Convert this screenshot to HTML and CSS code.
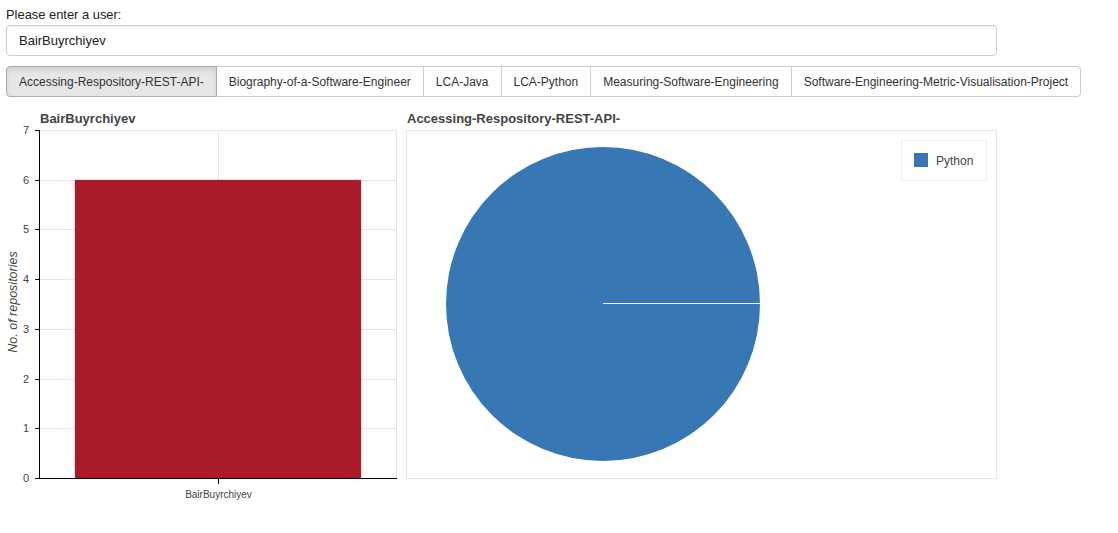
FILE: index.html
```html
<!DOCTYPE html>
<html>
<head>
<meta charset="utf-8">
<title>Repositories</title>
<link rel="stylesheet" href="styles.css">
</head>
<body>
<div class="app">
  <label class="field-label" for="user">Please enter a user:</label>
  <input id="user" class="text-input" type="text" value="BairBuyrchiyev">
  <div class="tabs">
    <button class="tab active">Accessing-Respository-REST-API-</button>
    <button class="tab">Biography-of-a-Software-Engineer</button>
    <button class="tab">LCA-Java</button>
    <button class="tab">LCA-Python</button>
    <button class="tab">Measuring-Software-Engineering</button>
    <button class="tab">Software-Engineering-Metric-Visualisation-Project</button>
  </div>
  <div class="charts">
    <svg class="bar-chart" width="400" height="410" viewBox="0 100 400 410">
      <text class="chart-title" x="40" y="123">BairBuyrchiyev</text>
      <g class="grid">
        <line x1="39" y1="130.5" x2="396" y2="130.5"/>
        <line x1="39" y1="180.5" x2="396" y2="180.5"/>
        <line x1="39" y1="229.5" x2="396" y2="229.5"/>
        <line x1="39" y1="279.5" x2="396" y2="279.5"/>
        <line x1="39" y1="329.5" x2="396" y2="329.5"/>
        <line x1="39" y1="379.5" x2="396" y2="379.5"/>
        <line x1="39" y1="428.5" x2="396" y2="428.5"/>
        <line x1="218.5" y1="130" x2="218.5" y2="478"/>
        <line x1="396.5" y1="130" x2="396.5" y2="478"/>
      </g>
      <rect class="bar" x="75" y="180" width="286" height="298"/>
      <g class="axis">
        <line x1="39.5" y1="130" x2="39.5" y2="479"/>
        <line x1="39" y1="478.5" x2="397" y2="478.5"/>
        <line x1="35" y1="130.5" x2="39" y2="130.5"/>
        <line x1="35" y1="180.5" x2="39" y2="180.5"/>
        <line x1="35" y1="229.5" x2="39" y2="229.5"/>
        <line x1="35" y1="279.5" x2="39" y2="279.5"/>
        <line x1="35" y1="329.5" x2="39" y2="329.5"/>
        <line x1="35" y1="379.5" x2="39" y2="379.5"/>
        <line x1="35" y1="428.5" x2="39" y2="428.5"/>
        <line x1="35" y1="478.5" x2="39" y2="478.5"/>
        <line x1="218.5" y1="478" x2="218.5" y2="484"/>
      </g>
      <g class="tick-labels">
        <text x="29" y="134">7</text>
        <text x="29" y="184">6</text>
        <text x="29" y="233">5</text>
        <text x="29" y="283">4</text>
        <text x="29" y="333">3</text>
        <text x="29" y="383">2</text>
        <text x="29" y="432">1</text>
        <text x="29" y="482">0</text>
      </g>
      <text class="x-label" x="218.5" y="498">BairBuyrchiyev</text>
      <text class="y-label" transform="translate(17 302) rotate(-90)">No. of repositories</text>
    </svg>
    <svg class="pie-chart" width="600" height="390" viewBox="400 100 600 390">
      <text class="chart-title" x="407" y="123">Accessing-Respository-REST-API-</text>
      <rect class="pie-frame" x="406.5" y="130.5" width="590" height="348"/>
      <circle class="slice" cx="603" cy="304" r="157"/>
      <line class="slice-edge" x1="603" y1="303.5" x2="761" y2="303.5"/>
      <rect class="legend" x="901.5" y="140.5" width="85" height="40"/>
      <rect class="swatch" x="914" y="153" width="14" height="14"/>
      <text class="legend-text" x="936" y="164.5">Python</text>
    </svg>
  </div>
</div>
</body>
</html>
```

FILE: styles.css
```css
html, body {
  margin: 0;
  padding: 0;
  background: #fff;
}

.app {
  padding: 5px 6px 0 6px;
  font-family: "Liberation Sans", Arial, sans-serif;
  color: #333;
}

.field-label {
  display: block;
  font-size: 12.9px;
  line-height: 20px;
  height: 20px;
  color: #222;
}

.text-input {
  display: block;
  box-sizing: border-box;
  width: 991px;
  height: 31px;
  margin: 0;
  padding: 0 12px;
  border: 1px solid #ccc;
  border-radius: 4px;
  font-family: "Liberation Sans", Arial, sans-serif;
  font-size: 13px;
  color: #222;
  background: #fff;
  box-shadow: inset 0 1px 1px rgba(0, 0, 0, 0.06);
  outline: none;
}

.tabs {
  display: flex;
  margin-top: 10px;
  height: 31px;
}

.tab {
  box-sizing: border-box;
  height: 31px;
  margin: 0 0 0 -1px;
  padding: 0 12px;
  border: 1px solid #ccc;
  background: #fff;
  font-family: "Liberation Sans", Arial, sans-serif;
  font-size: 12px;
  color: #333;
  white-space: nowrap;
  cursor: pointer;
}

.tab:first-child {
  margin-left: 0;
  border-radius: 4px 0 0 4px;
}

.tab:last-child {
  border-radius: 0 4px 4px 0;
}

.tab.active {
  position: relative;
  background: #e6e6e6;
  border-color: #adadad;
  box-shadow: inset 0 3px 5px rgba(0, 0, 0, 0.1);
}

.charts {
  display: flex;
  margin: 3px 0 0 -6px;
}

.charts svg {
  display: block;
  flex: none;
}

.chart-title {
  font-family: "Liberation Sans", Arial, sans-serif;
  font-size: 13px;
  font-weight: bold;
  fill: #444;
}

.grid line {
  stroke: #e5e5e5;
  stroke-width: 1;
}

.bar {
  fill: #aa1b29;
  stroke: rgba(170, 27, 41, 0.25);
  stroke-width: 1;
}

.axis line {
  stroke: #000;
  stroke-width: 1;
}

.tick-labels text {
  font-family: "Liberation Sans", Arial, sans-serif;
  font-size: 11px;
  fill: #444;
  text-anchor: end;
}

.x-label {
  font-family: "Liberation Sans", Arial, sans-serif;
  font-size: 10px;
  fill: #444;
  text-anchor: middle;
}

.y-label {
  font-family: "Liberation Sans", Arial, sans-serif;
  font-size: 12.5px;
  font-style: italic;
  fill: #444;
  text-anchor: middle;
}

.pie-frame {
  fill: none;
  stroke: #e5e5e5;
  stroke-width: 1;
}

.slice {
  fill: #3777b3;
}

.slice-edge {
  stroke: #fff;
  stroke-width: 1;
}

.legend {
  fill: #fff;
  stroke: #eee;
  stroke-width: 1;
}

.swatch {
  fill: #3777b3;
}

.legend-text {
  font-family: "Liberation Sans", Arial, sans-serif;
  font-size: 12px;
  fill: #444;
}
```
